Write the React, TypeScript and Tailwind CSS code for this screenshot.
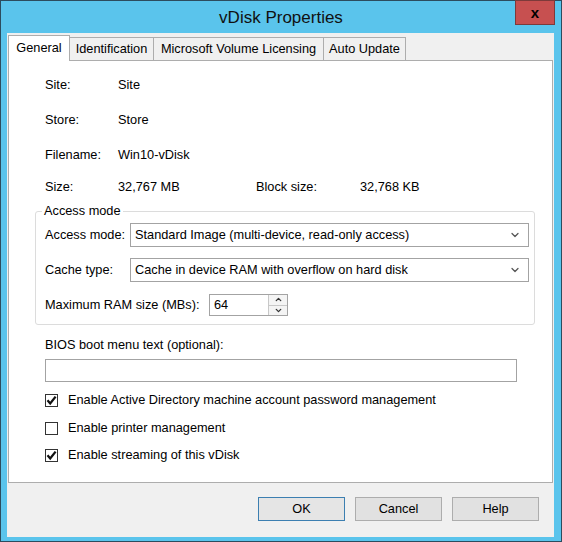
import { FiChevronDown, FiChevronUp } from 'react-icons/fi';

const font = { fontFamily: '"Liberation Sans", Arial, sans-serif' };

const tabs = [
  { label: 'Identification', w: 'w-[84px]' },
  { label: 'Microsoft Volume Licensing', w: 'w-[170px]' },
  { label: 'Auto Update', w: 'w-[82px]' },
];

const InfoRow = ({ label, value, h }: { label: string; value: string; h: string }) => (
  <div className={`flex items-center pl-[10px] ${h}`}>
    <span className="w-[73px]">{label}</span>
    <span>{value}</span>
  </div>
);

const Select = ({ value }: { value: string }) => (
  <div className="flex h-[24px] flex-1 items-center justify-between border border-[#a3a3a3] bg-white pl-[4px] pr-[7px]">
    <span>{value}</span>
    <FiChevronDown className="text-[12px] text-[#555]" strokeWidth={2.5} />
  </div>
);

const Check = ({ checked, label, mt }: { checked: boolean; label: string; mt: string }) => (
  <div className={`flex h-[16px] items-center pl-[10px] ${mt}`}>
    <div className="flex h-[13px] w-[13px] items-center justify-center border border-[#333] bg-white">
      {checked && (
        <svg width="11" height="11" viewBox="0 0 11 11">
          <path d="M1.5 5.3 L4.2 8.4 L9.6 1.6" fill="none" stroke="#111" strokeWidth="2.3" />
        </svg>
      )}
    </div>
    <span className="ml-[10px]">{label}</span>
  </div>
);

const App = () => {
  return (
    <div
      className="flex h-[542px] w-[562px] flex-col border border-[#2c4c5e] bg-[#5ac4ec] text-[12.75px] text-black"
      style={font}
    >
      {/* Title bar */}
      <div className="flex h-[32px]">
        <div className="w-[46px]" />
        <div className="flex flex-1 items-center justify-center pt-[1px] text-[17px] text-[#111]">
          vDisk Properties
        </div>
        <div className="flex w-[46px] items-start pr-[6px]">
          <div className="mt-[-1px] flex h-[25px] w-[40px] items-center justify-center border border-[#7d3a3a] bg-[#c75050] text-[15px] font-bold leading-none text-black">
            x
          </div>
        </div>
      </div>

      {/* Body */}
      <div className="ml-[6px] mr-[7px] flex flex-1 flex-col bg-[#f0f0f0]">
        {/* Tabs */}
        <div className="mt-[2px] flex h-[25px] items-end pl-[1px]">
          <div className="relative z-10 mb-[-1px] flex h-[26px] w-[62px] items-center justify-center border border-b-0 border-[#adadad] bg-white pb-[1px]">
            General
          </div>
          {tabs.map((t) => (
            <div
              key={t.label}
              className={`flex h-[23px] items-center justify-center border border-b-0 border-l-0 border-[#adadad] bg-[#f0f0f0] ${t.w}`}
            >
              {t.label}
            </div>
          ))}
        </div>

        {/* Panel */}
        <div className="mx-[1px] flex h-[423px] flex-col border border-[#adadad] bg-white pl-[26px] pr-[17px] pt-[7px]">
          <InfoRow label="Site:" value="Site" h="h-[34px]" />
          <InfoRow label="Store:" value="Store" h="h-[35px]" />
          <InfoRow label="Filename:" value="Win10-vDisk" h="h-[35px]" />
          <div className="flex h-[30px] items-center pl-[10px]">
            <span className="w-[73px]">Size:</span>
            <span className="w-[138px]">32,767 MB</span>
            <span className="w-[104px]">Block size:</span>
            <span>32,768 KB</span>
          </div>

          <fieldset className="mt-[1px] rounded-[3px] border border-[#dcdcdc] pb-[8px] pl-[9px] pr-[5px]">
            <legend className="ml-[-3px] px-[2px] leading-[16px]">Access mode</legend>
            <div className="mt-[4px] flex items-center">
              <span className="w-[85px]">Access mode:</span>
              <Select value="Standard Image (multi-device, read-only access)" />
            </div>
            <div className="mt-[11px] flex items-center">
              <span className="w-[85px]">Cache type:</span>
              <Select value="Cache in device RAM with overflow on hard disk" />
            </div>
            <div className="mt-[12px] flex items-center">
              <span className="w-[164px]">Maximum RAM size (MBs):</span>
              <div className="flex h-[22px] w-[79px] items-center justify-between border border-[#a3a3a3] bg-white pl-[4px]">
                <span>64</span>
                <div className="flex h-full w-[19px] flex-col border-l border-[#c8c8c8]">
                  <div className="flex flex-1 items-center justify-center border-b border-[#c8c8c8] bg-[#f4f4f4]">
                    <FiChevronUp className="text-[9px] text-[#333]" strokeWidth={3.5} />
                  </div>
                  <div className="flex flex-1 items-center justify-center bg-[#f4f4f4]">
                    <FiChevronDown className="text-[9px] text-[#333]" strokeWidth={3.5} />
                  </div>
                </div>
              </div>
            </div>
          </fieldset>

          <div className="mt-[12px] pl-[10px] leading-[16px]">BIOS boot menu text (optional):</div>
          <div className="ml-[10px] mt-[6px] h-[23px] w-[472px] border border-[#a3a3a3] bg-white" />

          <Check checked label="Enable Active Directory machine account password management" mt="mt-[10px]" />
          <Check checked={false} label="Enable printer management" mt="mt-[12px]" />
          <Check checked label="Enable streaming of this vDisk" mt="mt-[11px]" />
        </div>

        {/* Buttons */}
        <div className="mt-[14px] flex justify-end gap-[10px] pr-[15px]">
          <button className="h-[24px] w-[87px] border border-[#3c7fb1] bg-[#e5e5e5]">OK</button>
          <button className="h-[24px] w-[87px] border border-[#adadad] bg-[#e1e1e1]">Cancel</button>
          <button className="h-[24px] w-[87px] border border-[#adadad] bg-[#e1e1e1]">Help</button>
        </div>
        <div className="h-[16px]" />
      </div>
      <div className="h-[4px]" />
    </div>
  );
};

export default App;
